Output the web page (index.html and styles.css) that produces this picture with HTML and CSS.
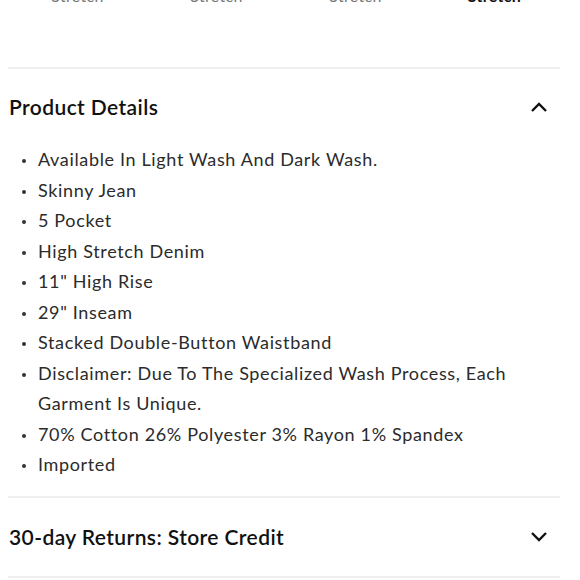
FILE: index.html
```html
<!DOCTYPE html>
<html lang="en">
<head>
  <meta charset="UTF-8">
  <title>Product Details</title>
  <link rel="stylesheet" href="styles.css">
</head>
<body>

  <div class="page">
    <div class="fit-options">
      <div class="fit-option">Stretch</div>
      <div class="fit-option">Stretch</div>
      <div class="fit-option">Stretch</div>
      <div class="fit-option active">Stretch</div>
    </div>

    <!-- Detalles del producto -->
    <div class="accordion open">
      <div class="accordion-header">
        <h3>Product Details</h3>
        <svg class="chevron" width="18" height="12" viewBox="0 0 18 12">
          <polyline points="2,10 9,3 16,10" fill="none" stroke="#111" stroke-width="2.4" />
        </svg>
      </div>
      <ul class="details-list">
        <li>Available In Light Wash And Dark Wash.</li>
        <li>Skinny Jean</li>
        <li>5 Pocket</li>
        <li>High Stretch Denim</li>
        <li>11" High Rise</li>
        <li>29" Inseam</li>
        <li>Stacked Double-Button Waistband</li>
        <li>Disclaimer: Due To The Specialized Wash Process, Each Garment Is Unique.</li>
        <li>70% Cotton 26% Polyester 3% Rayon 1% Spandex</li>
        <li>Imported</li>
      </ul>
    </div>

    <div class="accordion">
      <div class="accordion-header">
        <h3>30-day Returns: Store Credit</h3>
        <svg class="chevron" width="18" height="12" viewBox="0 0 18 12">
          <polyline points="2,2 9,9 16,2" fill="none" stroke="#111" stroke-width="2.4" />
        </svg>
      </div>
    </div>
  </div>

</body>
</html>
```

FILE: styles.css
```css
body {
  font-family: Lato, "Noto Sans", sans-serif;
  background-color: #ffffff;
  margin: 0;
  color: #222;
}

.page {
  padding: 0 20px 0 8px;
}

.fit-options {
  display: grid;
  grid-template-columns: repeat(4, 139px);
  margin-top: -14px;
  height: 81px;
}

.fit-option {
  text-align: center;
  font-size: 16px;
  color: #777;
  letter-spacing: 0.3px;
}

.fit-option.active {
  color: #111;
  font-weight: bold;
}

.accordion {
  border-top: 2px solid #efefef;
}

.accordion:last-child {
  border-bottom: 2px solid #efefef;
}

.accordion:last-child .accordion-header {
  height: 78px;
}

.accordion-header {
  display: flex;
  justify-content: space-between;
  align-items: center;
  height: 75px;
  padding: 0 12px 0 1px;
}

.accordion-header h3 {
  margin: 0;
  font-size: 21px;
  font-weight: 600;
  color: #111;
  letter-spacing: 0.4px;
}

.chevron {
  display: block;
}

.details-list {
  list-style: none;
  margin: 0;
  padding: 0 0 16px 30px;
  font-size: 18px;
  line-height: 30.5px;
  color: #2b2b2b;
  letter-spacing: 0.65px;
}

.details-list li {
  position: relative;
}

.details-list li::before {
  content: "";
  position: absolute;
  left: -16px;
  top: 15px;
  width: 4px;
  height: 4px;
  border-radius: 50%;
  background-color: #333;
}
```
